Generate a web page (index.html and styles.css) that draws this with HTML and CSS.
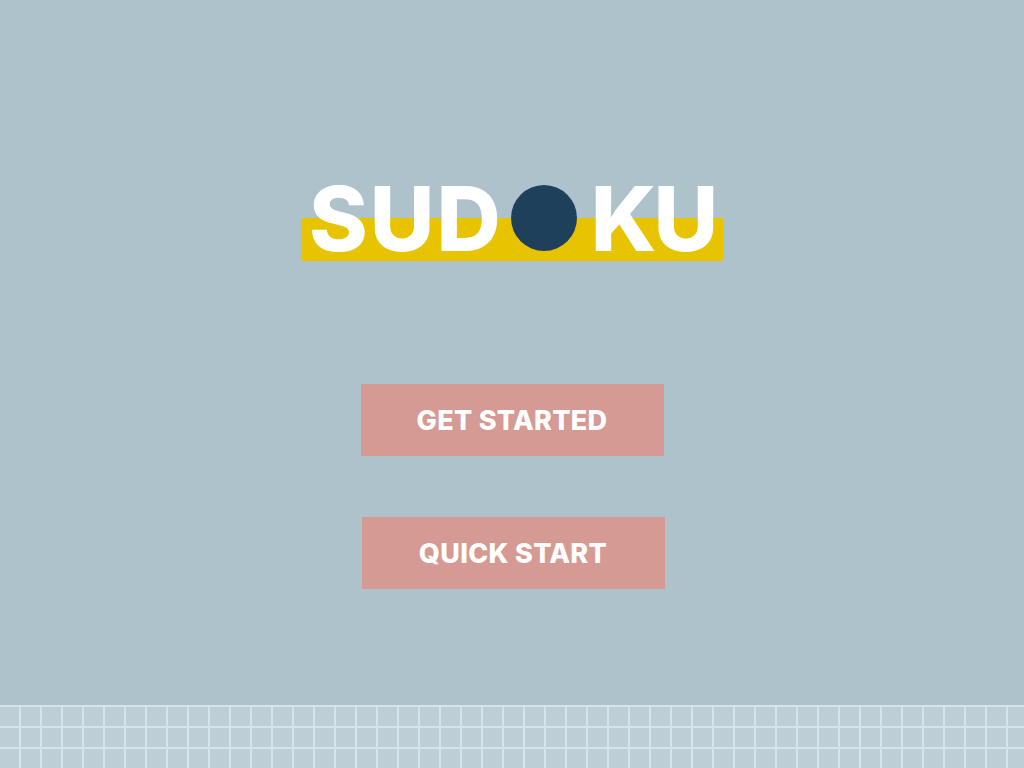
FILE: index.html
```html
<!DOCTYPE html>
<html lang="en">
<head>
<meta charset="utf-8">
<title>Sudoku</title>
<link rel="stylesheet" href="styles.css">
</head>
<body>
<div class="screen">
  <main class="content">
    <h1 class="logo">
      <span class="word word-left">SUD</span><span class="dot">O</span><span class="word word-right">KU</span>
    </h1>
    <div class="actions">
      <button class="btn">GET STARTED</button>
      <button class="btn btn-second">QUICK START</button>
    </div>
  </main>
  <div class="grid"></div>
</div>
</body>
</html>
```
FILE: styles.css
```css
html, body {
  margin: 0;
  padding: 0;
}
body {
  background: #adc2cb;
  font-family: "Inter", "Liberation Sans", sans-serif;
}
.screen {
  height: 768px;
  display: flex;
  flex-direction: column;
}
.content {
  flex: 1;
  display: flex;
  flex-direction: column;
  align-items: center;
  padding-top: 185px;
}
.logo {
  margin: 0;
  width: 422px;
  height: 76px;
  box-sizing: border-box;
  padding-left: 8px;
  display: flex;
  align-items: flex-start;
  background: linear-gradient(to bottom, transparent 33px, #e8c300 33px);
  color: #ffffff;
  font-size: 89px;
  font-weight: 800;
  line-height: 76px;
}
.word {
  display: block;
  margin-top: -4px;
  flex-shrink: 0;
}
.word-left {
  letter-spacing: 2px;
}
.word-right {
  letter-spacing: -3px;
}
.dot {
  display: block;
  flex-shrink: 0;
  width: 66px;
  height: 66px;
  border-radius: 50%;
  background: #1e405b;
  color: #1e405b;
  font-size: 10px;
  line-height: 66px;
  text-align: center;
  overflow: hidden;
  margin: 0 14px 0 8px;
}
.actions {
  display: flex;
  flex-direction: column;
  align-items: center;
  gap: 61px;
  margin-top: 123px;
}
.btn {
  width: 303px;
  height: 72px;
  border: 0;
  padding: 0;
  background: #d49a93;
  color: #ffffff;
  font-family: inherit;
  font-size: 27px;
  font-weight: 800;
  letter-spacing: 0.3px;
}
.btn-second {
  margin-left: 2px;
}
.grid {
  height: 63px;
  background-color: #bdced6;
  background-image:
    linear-gradient(to right, #d5e3ea 0, #d5e3ea 2px, transparent 2px),
    linear-gradient(to bottom, #d5e3ea 0, #d5e3ea 2px, transparent 2px);
  background-size: 21px 21px, 21px 21px;
  background-position: 19px 0, 0 0;
}
```
